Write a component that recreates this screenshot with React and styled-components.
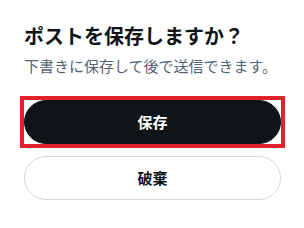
import styled, { createGlobalStyle } from 'styled-components';

const GlobalStyle = createGlobalStyle`
    html, body {
        margin: 0;
        padding: 0;
        background: #ffffff;
    }

    body {
        font-family: "Noto Sans CJK JP", "Noto Sans", sans-serif;
        color: #0f1419;
    }
`;

export const Dialog = styled.div`
    width: 304px;
    height: 228px;
    box-sizing: border-box;
    padding: 24px 23px 0 24px;
    display: flex;
    flex-direction: column;
    background: #ffffff;
`;

export const Title = styled.h1`
    margin: 0;
    font-size: 20px;
    line-height: 24px;
    font-weight: 700;
    color: #0f1419;
`;

export const Subtitle = styled.p`
    margin: 8px 0 0;
    font-size: 15px;
    line-height: 20px;
    font-weight: 400;
    color: #536471;
`;

export const Actions = styled.div`
    margin-top: 24px;
    display: flex;
    flex-direction: column;
    gap: 12px;
`;

export const FocusFrame = styled.div`
    margin: -4px;
    border: 4px solid #e3212d;
    display: flex;
`;

export const Btn = styled.button`
    width: 100%;
    height: 44px;
    box-sizing: border-box;
    border-radius: 9999px;
    border: 1px solid ${({ $primary }) => ($primary ? '#0f1419' : '#cfd9de')};
    background: ${({ $primary }) => ($primary ? '#0f1419' : '#ffffff')};
    color: ${({ $primary }) => ($primary ? '#ffffff' : '#0f1419')};
    font-family: inherit;
    font-size: 15px;
    font-weight: 700;
    line-height: 20px;
    cursor: pointer;
    padding: 0 24px;
`;

const App = () => {
    return (
        <>
            <GlobalStyle />
            <Dialog>
                <Title>ポストを保存しますか？</Title>
                <Subtitle>下書きに保存して後で送信できます。</Subtitle>
                <Actions>
                    <FocusFrame>
                        <Btn $primary>保存</Btn>
                    </FocusFrame>
                    <Btn>破棄</Btn>
                </Actions>
            </Dialog>
        </>
    )
}

export default App
